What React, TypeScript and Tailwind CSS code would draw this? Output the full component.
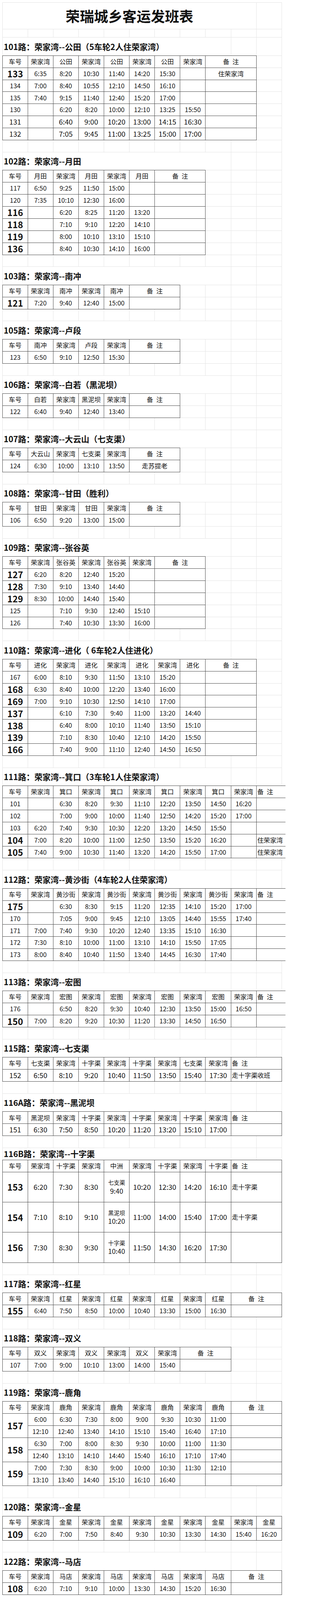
import React from 'react';

type Row = { no: string; b?: boolean; lg?: boolean; c: string[]; c2?: string[]; note?: string };
type Remark = 'c2' | 'l2' | 'l1x' | 'none';
type T = {
  title: string;
  titleH?: string;
  rowH?: string;
  headers: string[];
  remark: Remark;
  rows: Row[];
  double?: boolean;
};

const SPAN: Record<number, string> = {
  1: 'col-span-1',
  2: 'col-span-2',
  9: 'col-span-9',
  10: 'col-span-10',
};

const FAINT = 'border-[#e4e4e4]';
const DARK = 'border-[#4a4a4a]';

function Cell({
  span = 1,
  dark = false,
  first = false,
  top = false,
  left = false,
  ext = false,
  rs2 = false,
  children,
}: {
  span?: number;
  dark?: boolean;
  first?: boolean;
  top?: boolean;
  left?: boolean;
  ext?: boolean;
  rs2?: boolean;
  children?: React.ReactNode;
}) {
  const cls = [
    SPAN[span],
    'flex min-h-0 items-center whitespace-nowrap leading-[1.2] border-r border-b',
    dark ? DARK : FAINT,
    first ? 'border-l' : '',
    top ? 'border-t' : '',
    top && dark ? '-mt-px' : '',
    left ? 'justify-start pl-[2px]' : 'justify-center',
    ext ? 'w-[74px] border-r-0' : '',
    rs2 ? 'row-span-2' : '',
  ].join(' ');
  return <div className={cls}>{children}</div>;
}

function Faint({ n }: { n: number }) {
  return (
    <>
      {Array.from({ length: Math.max(0, n) }).map((_, i) => (
        <Cell key={i} />
      ))}
    </>
  );
}

function Blank({ h }: { h: string }) {
  return (
    <div className={'grid grid-cols-11 grid-rows-1 ' + h}>
      <Cell first />
      <Faint n={10} />
    </div>
  );
}

const BeiZhu = () => (
  <span className="text-[16.4px]">
    <span>备</span>
    <span className="ml-[8px]">注</span>
  </span>
);

function TimeText({ v, lg }: { v: string; lg?: boolean }) {
  if (v.includes('\n')) {
    const [a, b] = v.split('\n');
    return (
      <div className="flex flex-col items-center gap-[3px]">
        <span className="text-[14.5px]">{a}</span>
        <span className="text-[17.3px]">{b}</span>
      </div>
    );
  }
  return <span className={lg ? 'text-[18.2px]' : 'text-[16.4px]'}>{v}</span>;
}

function Section({ t, blankH }: { t: T; blankH: string }) {
  const rSpan = t.remark === 'none' ? 0 : t.remark === 'l1x' ? 1 : 2;
  const used = 1 + t.headers.length + rSpan;
  const faint = 11 - used;
  const remarkLeft = t.remark !== 'c2';
  const ext = t.remark === 'l1x';
  const rowH = t.rowH ?? 'h-[30.9px]';

  return (
    <>
      <Blank h={blankH} />
      <div className={'grid grid-cols-11 grid-rows-1 ' + (t.titleH ?? 'h-[46.4px]')}>
        <Cell span={9} first left>
          <span className="text-[20.9px] font-bold">{t.title}</span>
        </Cell>
        <Faint n={2} />
      </div>
      <div className="grid grid-cols-11 grid-rows-1 h-[30.9px]">
        <Cell dark first top>
          <span className="text-[16.4px]">车号</span>
        </Cell>
        {t.headers.map((h, i) => (
          <Cell key={i} dark top>
            <span className="text-[16.4px]">{h}</span>
          </Cell>
        ))}
        {rSpan > 0 && (
          <Cell span={rSpan} dark top left={remarkLeft} ext={ext}>
            <BeiZhu />
          </Cell>
        )}
        <Faint n={faint} />
      </div>
      {t.rows.map((r, ri) => {
        const noCls = r.b ? 'text-[22.7px] font-bold' : r.lg ? 'text-[18.2px]' : 'text-[16.4px]';
        if (t.double && r.c2) {
          return (
            <div key={ri} className="grid grid-cols-11 grid-rows-2 h-[61.8px]">
              <Cell dark first rs2>
                <span className={noCls}>{r.no}</span>
              </Cell>
              {r.c.map((v, i) => (
                <Cell key={'a' + i} dark>
                  <TimeText v={v} lg={r.lg} />
                </Cell>
              ))}
              <Cell span={2} dark />
              {r.c2.map((v, i) => (
                <Cell key={'b' + i} dark>
                  <TimeText v={v} lg={r.lg} />
                </Cell>
              ))}
              <Cell span={2} dark />
            </div>
          );
        }
        return (
          <div key={ri} className={'grid grid-cols-11 grid-rows-1 ' + rowH}>
            <Cell dark first>
              <span className={noCls}>{r.no}</span>
            </Cell>
            {r.c.map((v, i) => (
              <Cell key={i} dark>
                <TimeText v={v} lg={r.lg} />
              </Cell>
            ))}
            {rSpan > 0 && (
              <Cell span={rSpan} dark left={remarkLeft} ext={ext}>
                {r.note ? <span className="text-[16.4px]">{r.note}</span> : null}
              </Cell>
            )}
            <Faint n={faint} />
          </div>
        );
      })}
    </>
  );
}

const TABLES: T[] = [
  {
    title: '101路：荣家湾--公田（5车轮2人住荣家湾）',
    headers: ['荣家湾', '公田', '荣家湾', '公田', '荣家湾', '公田', '荣家湾'],
    remark: 'c2',
    rows: [
      { no: '133', b: true, c: ['6:35', '8:20', '10:30', '11:40', '14:20', '15:30', ''], note: '住荣家湾' },
      { no: '134', c: ['7:00', '8:40', '10:55', '12:10', '14:50', '16:10', ''] },
      { no: '135', c: ['7:40', '9:15', '11:40', '12:40', '15:20', '17:00', ''] },
      { no: '130', c: ['', '6:20', '8:20', '10:00', '12:10', '13:25', '15:50'] },
      { no: '131', lg: true, c: ['', '6:40', '9:00', '10:20', '13:00', '14:15', '16:30'] },
      { no: '132', lg: true, c: ['', '7:05', '9:45', '11:00', '13:25', '15:00', '17:00'] },
    ],
  },
  {
    title: '102路：荣家湾--月田',
    headers: ['月田', '荣家湾', '月田', '荣家湾', '月田'],
    remark: 'c2',
    rows: [
      { no: '117', c: ['6:50', '9:25', '11:50', '15:00', ''] },
      { no: '120', c: ['7:35', '10:10', '12:30', '16:00', ''] },
      { no: '116', b: true, c: ['', '6:20', '8:25', '11:20', '13:20'] },
      { no: '118', b: true, c: ['', '7:10', '9:10', '12:20', '14:10'] },
      { no: '119', b: true, c: ['', '8:00', '10:10', '13:10', '15:10'] },
      { no: '136', b: true, c: ['', '8:40', '10:30', '14:10', '16:00'] },
    ],
  },
  {
    title: '103路：荣家湾--南冲',
    headers: ['荣家湾', '南冲', '荣家湾', '南冲'],
    remark: 'c2',
    rows: [{ no: '121', b: true, c: ['7:20', '9:40', '12:40', '15:00'] }],
  },
  {
    title: '105路：荣家湾--卢段',
    headers: ['南冲', '荣家湾', '卢段', '荣家湾'],
    remark: 'c2',
    rows: [{ no: '123', c: ['6:50', '9:10', '12:50', '15:30'] }],
  },
  {
    title: '106路：荣家湾--白若（黑泥坝）',
    headers: ['白若', '荣家湾', '黑泥坝', '荣家湾'],
    remark: 'c2',
    rows: [{ no: '122', c: ['6:40', '9:40', '12:40', '13:40'] }],
  },
  {
    title: '107路：荣家湾--大云山（七支渠）',
    headers: ['大云山', '荣家湾', '七支渠', '荣家湾'],
    remark: 'c2',
    rows: [{ no: '124', c: ['6:30', '10:00', '13:10', '13:50'], note: '走苏提老' }],
  },
  {
    title: '108路：荣家湾--甘田（胜利）',
    headers: ['甘田', '荣家湾', '甘田', '荣家湾'],
    remark: 'c2',
    rows: [{ no: '106', c: ['6:50', '9:20', '13:00', '15:00'] }],
  },
  {
    title: '109路：荣家湾--张谷英',
    headers: ['荣家湾', '张谷英', '荣家湾', '张谷英', '荣家湾'],
    remark: 'c2',
    rows: [
      { no: '127', b: true, c: ['6:20', '8:20', '12:40', '15:20', ''] },
      { no: '128', b: true, c: ['7:30', '9:10', '13:40', '14:40', ''] },
      { no: '129', b: true, c: ['8:30', '10:00', '14:40', '15:40', ''] },
      { no: '125', c: ['', '7:10', '9:30', '12:40', '15:10'] },
      { no: '126', c: ['', '7:40', '10:30', '13:30', '16:00'] },
    ],
  },
  {
    title: '110路：荣家湾--进化（ 6车轮2人住进化）',
    headers: ['进化', '荣家湾', '进化', '荣家湾', '进化', '荣家湾', '进化'],
    remark: 'c2',
    rows: [
      { no: '167', c: ['6:00', '8:10', '9:30', '11:50', '13:10', '15:20', ''] },
      { no: '168', b: true, c: ['6:30', '8:40', '10:00', '12:20', '13:40', '16:00', ''] },
      { no: '169', b: true, c: ['7:00', '9:10', '10:30', '12:50', '14:10', '17:00', ''] },
      { no: '137', b: true, c: ['', '6:10', '7:30', '9:40', '11:00', '13:20', '14:40'] },
      { no: '138', b: true, c: ['', '6:40', '8:00', '10:10', '11:40', '13:50', '15:10'] },
      { no: '139', b: true, c: ['', '7:10', '8:30', '10:40', '12:10', '14:20', '15:50'] },
      { no: '166', b: true, c: ['', '7:40', '9:00', '11:10', '12:40', '14:50', '16:50'] },
    ],
  },
  {
    title: '111路：荣家湾--箕口（3车轮1人住荣家湾）',
    headers: ['荣家湾', '箕口', '荣家湾', '箕口', '荣家湾', '箕口', '荣家湾', '箕口', '荣家湾'],
    remark: 'l1x',
    rows: [
      { no: '101', c: ['', '6:30', '8:20', '9:30', '11:10', '12:20', '13:50', '14:50', '16:20'] },
      { no: '102', c: ['', '7:00', '9:00', '10:00', '11:40', '12:50', '14:20', '15:20', '17:00'] },
      { no: '103', c: ['6:20', '7:40', '9:30', '10:30', '12:20', '13:20', '14:50', '15:50', ''] },
      { no: '104', b: true, c: ['7:00', '8:20', '10:00', '11:00', '12:50', '13:50', '15:20', '16:20', ''], note: '住荣家湾' },
      { no: '105', b: true, c: ['7:40', '9:00', '10:30', '11:40', '13:20', '14:20', '15:50', '17:00', ''], note: '住荣家湾' },
    ],
  },
  {
    title: '112路：荣家湾--黄沙街（4车轮2人住荣家湾）',
    headers: ['荣家湾', '黄沙街', '荣家湾', '黄沙街', '荣家湾', '黄沙街', '荣家湾', '黄沙街', '荣家湾'],
    remark: 'l1x',
    rows: [
      { no: '175', b: true, c: ['', '6:30', '8:30', '9:15', '11:20', '12:35', '14:10', '15:20', '17:00'] },
      { no: '170', c: ['', '7:05', '9:00', '9:45', '12:10', '13:05', '14:40', '15:55', '17:40'] },
      { no: '171', c: ['7:00', '7:40', '9:30', '10:20', '12:40', '13:35', '15:10', '16:30', ''] },
      { no: '172', c: ['7:30', '8:10', '10:00', '11:00', '13:10', '14:10', '15:50', '17:05', ''] },
      { no: '173', c: ['8:00', '8:40', '10:40', '11:50', '13:40', '14:45', '16:30', '17:40', ''] },
    ],
  },
  {
    title: '113路：荣家湾--宏图',
    headers: ['荣家湾', '宏图', '荣家湾', '宏图', '荣家湾', '宏图', '荣家湾', '宏图', '荣家湾'],
    remark: 'l1x',
    rows: [
      { no: '176', c: ['', '6:50', '8:20', '9:30', '10:40', '12:30', '13:50', '15:00', '16:50'] },
      { no: '150', b: true, c: ['7:00', '8:20', '9:20', '10:30', '11:20', '13:30', '14:50', '16:50', ''] },
    ],
  },
  {
    title: '115路：荣家湾--七支渠',
    headers: ['七支渠', '荣家湾', '十字渠', '荣家湾', '十字渠', '荣家湾', '七支渠', '荣家湾'],
    remark: 'l2',
    rows: [
      { no: '152', lg: true, c: ['6:50', '8:10', '9:20', '10:40', '11:50', '13:50', '15:40', '17:30'], note: '走十字渠收班' },
    ],
  },
  {
    title: '116A路：荣家湾--黑泥坝',
    headers: ['黑泥坝', '荣家湾', '十字渠', '荣家湾', '十字渠', '荣家湾', '十字渠', '荣家湾'],
    remark: 'l2',
    rows: [{ no: '151', lg: true, c: ['6:30', '7:50', '8:50', '10:20', '11:20', '13:20', '15:10', '17:00'] }],
  },
  {
    title: '116B路：荣家湾--十字渠',
    titleH: 'h-[30.9px]',
    rowH: 'h-[77.3px]',
    headers: ['荣家湾', '十字渠', '荣家湾', '中洲', '荣家湾', '十字渠', '荣家湾', '十字渠'],
    remark: 'l2',
    rows: [
      { no: '153', b: true, lg: true, c: ['6:20', '7:30', '8:30', '七支渠\n9:40', '10:20', '12:30', '14:20', '16:10'], note: '走十字渠' },
      { no: '154', b: true, lg: true, c: ['7:10', '8:10', '9:10', '黑泥坝\n10:20', '11:00', '14:00', '15:40', '17:00'], note: '走十字渠' },
      { no: '156', b: true, lg: true, c: ['7:30', '8:30', '9:30', '十字渠\n10:40', '11:50', '14:30', '16:20', '17:30'] },
    ],
  },
  {
    title: '117路：荣家湾--红星',
    headers: ['荣家湾', '红星', '荣家湾', '红星', '荣家湾', '红星', '荣家湾', '红星'],
    remark: 'c2',
    rows: [{ no: '155', b: true, c: ['6:40', '7:50', '8:50', '10:00', '10:40', '13:30', '15:00', '16:30'] }],
  },
  {
    title: '118路：荣家湾--双义',
    headers: ['双义', '荣家湾', '双义', '荣家湾', '双义', '荣家湾'],
    remark: 'c2',
    rows: [{ no: '107', c: ['7:00', '9:00', '10:10', '13:00', '14:00', '15:40'] }],
  },
  {
    title: '119路：荣家湾--鹿角',
    headers: ['荣家湾', '鹿角', '荣家湾', '鹿角', '荣家湾', '鹿角', '荣家湾', '鹿角'],
    remark: 'c2',
    double: true,
    rows: [
      {
        no: '157',
        b: true,
        c: ['6:00', '6:30', '7:30', '8:00', '9:00', '9:30', '10:30', '11:00'],
        c2: ['12:10', '12:40', '13:40', '14:10', '15:10', '15:40', '16:40', '17:10'],
      },
      {
        no: '158',
        b: true,
        c: ['6:30', '7:00', '8:00', '8:30', '9:30', '10:00', '11:00', '11:30'],
        c2: ['12:40', '13:10', '14:10', '14:40', '15:40', '16:10', '17:10', '17:40'],
      },
      {
        no: '159',
        b: true,
        c: ['7:00', '7:30', '8:30', '9:00', '10:00', '10:30', '11:30', '12:10'],
        c2: ['13:10', '13:40', '14:40', '15:10', '16:10', '16:40', '', ''],
      },
    ],
  },
  {
    title: '120路：荣家湾--金星',
    headers: ['荣家湾', '金星', '荣家湾', '金星', '荣家湾', '金星', '荣家湾', '金星', '荣家湾', '金星'],
    remark: 'none',
    rows: [
      { no: '109', b: true, c: ['6:20', '7:00', '7:50', '8:40', '9:30', '10:30', '13:30', '14:30', '15:40', '16:20'] },
    ],
  },
  {
    title: '122路：荣家湾--马店',
    headers: ['荣家湾', '马店', '荣家湾', '马店', '荣家湾', '马店', '荣家湾', '马店'],
    remark: 'c2',
    rows: [{ no: '108', b: true, c: ['6:20', '7:10', '9:10', '10:00', '13:30', '14:30', '15:20', '16:30'] }],
  },
];

export default function App() {
  return (
    <div className="w-full h-[4090px] overflow-hidden bg-white pl-[6.4px] pt-[6.4px] text-[#111111] font-['Noto_Sans_CJK_SC','Noto_Sans',sans-serif]">
      <div className="w-[716.4px]">
        <div className="grid grid-cols-11 grid-rows-1 h-[69.1px]">
          <Cell span={10} first top>
            <span className="text-[36.4px] font-bold">荣瑞城乡客运发班表</span>
          </Cell>
          <Cell top />
        </div>
        {TABLES.map((t, i) => (
          <Section key={i} t={t} blankH={i === 0 ? 'h-[20.9px]' : 'h-[30.9px]'} />
        ))}
      </div>
    </div>
  );
}
